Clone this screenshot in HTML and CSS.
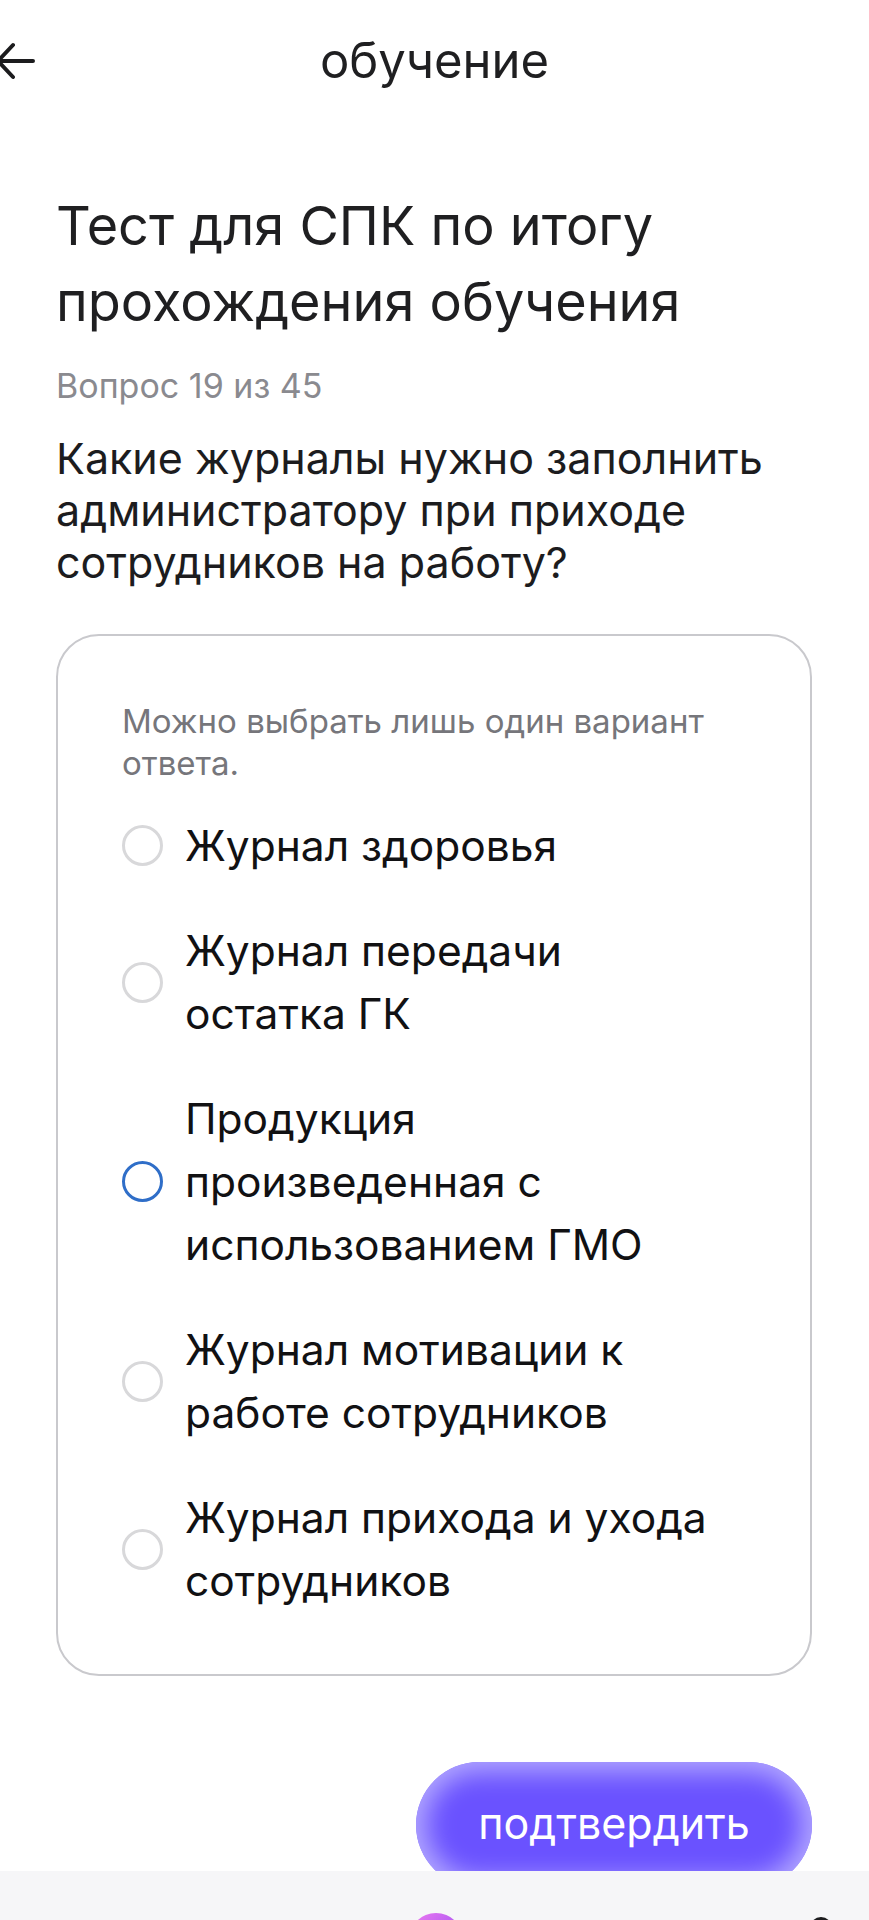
FILE: index.html
```html
<!DOCTYPE html>
<html lang="ru">
<head>
<meta charset="utf-8">
<title>обучение</title>
<link rel="stylesheet" href="styles.css">
</head>
<body>
<header class="topbar">
  <div class="topbar-left">
    <svg class="back" viewBox="0 0 40 40" width="40" height="40" aria-hidden="true">
      <path d="M38 20 H3 M18 4 L3 20 L18 36" fill="none" stroke="#1c1c1e" stroke-width="4" stroke-linecap="round" stroke-linejoin="round"/>
    </svg>
  </div>
  <div class="topbar-title">обучение</div>
  <div class="topbar-right"></div>
</header>

<main class="page">
  <h1 class="test-title">Тест для СПК по итогу прохождения обучения</h1>
  <p class="counter">Вопрос 19 из 45</p>
  <p class="question">Какие журналы нужно заполнить администратору при приходе сотрудников на работу?</p>

  <section class="card">
    <p class="hint">Можно выбрать лишь один вариант ответа.</p>
    <ul class="options">
      <li class="option"><span class="radio"></span><span class="opt-text">Журнал здоровья</span></li>
      <li class="option"><span class="radio"></span><span class="opt-text">Журнал передачи<br>остатка ГК</span></li>
      <li class="option"><span class="radio radio-focus"></span><span class="opt-text">Продукция<br>произведенная с<br>использованием ГМО</span></li>
      <li class="option"><span class="radio"></span><span class="opt-text">Журнал мотивации к<br>работе сотрудников</span></li>
      <li class="option"><span class="radio"></span><span class="opt-text">Журнал прихода и ухода<br>сотрудников</span></li>
    </ul>
  </section>

  <div class="actions">
    <button class="confirm" type="button">подтвердить</button>
  </div>
</main>

<nav class="tabbar">
  <span class="tab-orb"></span>
  <span class="tab-icon"></span>
</nav>
</body>
</html>
```

FILE: styles.css
```css
* { box-sizing: border-box; }

html, body {
  margin: 0;
  padding: 0;
  background: #ffffff;
}

body {
  width: 869px;
  min-height: 1920px;
  font-family: "Inter", "Noto Sans", "Liberation Sans", sans-serif;
  color: #1d1d1f;
  overflow: hidden;
}

.topbar {
  display: grid;
  grid-template-columns: 1fr auto 1fr;
  align-items: center;
  height: 122px;
}

.topbar-left {
  display: flex;
  align-items: center;
}

.back {
  display: block;
  margin-left: -5px;
}

.topbar-title {
  font-size: 49px;
  line-height: 56px;
  color: #1f1f21;
}

.page {
  padding: 0 57px 0 56px;
}

.test-title {
  margin: 66px 0 0;
  font-size: 54px;
  line-height: 76px;
  font-weight: 400;
  color: #1f1f21;
  width: 660px;
}

.counter {
  margin: 26px 0 0;
  font-size: 34px;
  line-height: 40px;
  color: #8a8a8f;
}

.question {
  margin: 26px 0 0;
  font-size: 43px;
  line-height: 52px;
  color: #1c1c1e;
}

.card {
  margin-top: 46px;
  border: 2px solid #c9c9cd;
  border-radius: 43px;
  padding: 64px 40px 62px 64px;
}

.hint {
  margin: 0;
  font-size: 33px;
  line-height: 42px;
  color: #76767b;
}

.options {
  list-style: none;
  margin: 30px 0 0;
  padding: 0;
  display: flex;
  flex-direction: column;
  gap: 42px;
}

.option {
  display: flex;
  align-items: center;
  gap: 22px;
}

.radio {
  flex: none;
  width: 41px;
  height: 41px;
  border-radius: 50%;
  border: 3px solid #d8d8da;
}

.radio-focus {
  border-color: #2f6ec8;
}

.opt-text {
  font-size: 42.5px;
  line-height: 63px;
  color: #111113;
}

.actions {
  display: flex;
  justify-content: flex-end;
  margin-top: 86px;
}

.confirm {
  width: 396px;
  height: 126px;
  border: none;
  border-radius: 63px;
  background: #6a52ff;
  box-shadow: inset 0 0 26px 10px #b3a8ff;
  color: #ffffff;
  font-family: "Inter", "Noto Sans", "Liberation Sans", sans-serif;
  font-size: 43px;
  padding: 0 0 4px;
}

.tabbar {
  position: fixed;
  left: 0;
  right: 0;
  bottom: 0;
  height: 49px;
  background: #f6f6f8;
  overflow: hidden;
}

.tab-orb {
  position: absolute;
  left: 409px;
  top: 42px;
  width: 54px;
  height: 54px;
  border-radius: 50%;
  background: linear-gradient(135deg, #f07af0 0%, #b45cf2 55%, #8d4ff0 100%);
}

.tab-icon {
  position: absolute;
  left: 810px;
  top: 46px;
  width: 22px;
  height: 22px;
  border-radius: 50%;
  border: 3px solid #1c1c1e;
}
```
